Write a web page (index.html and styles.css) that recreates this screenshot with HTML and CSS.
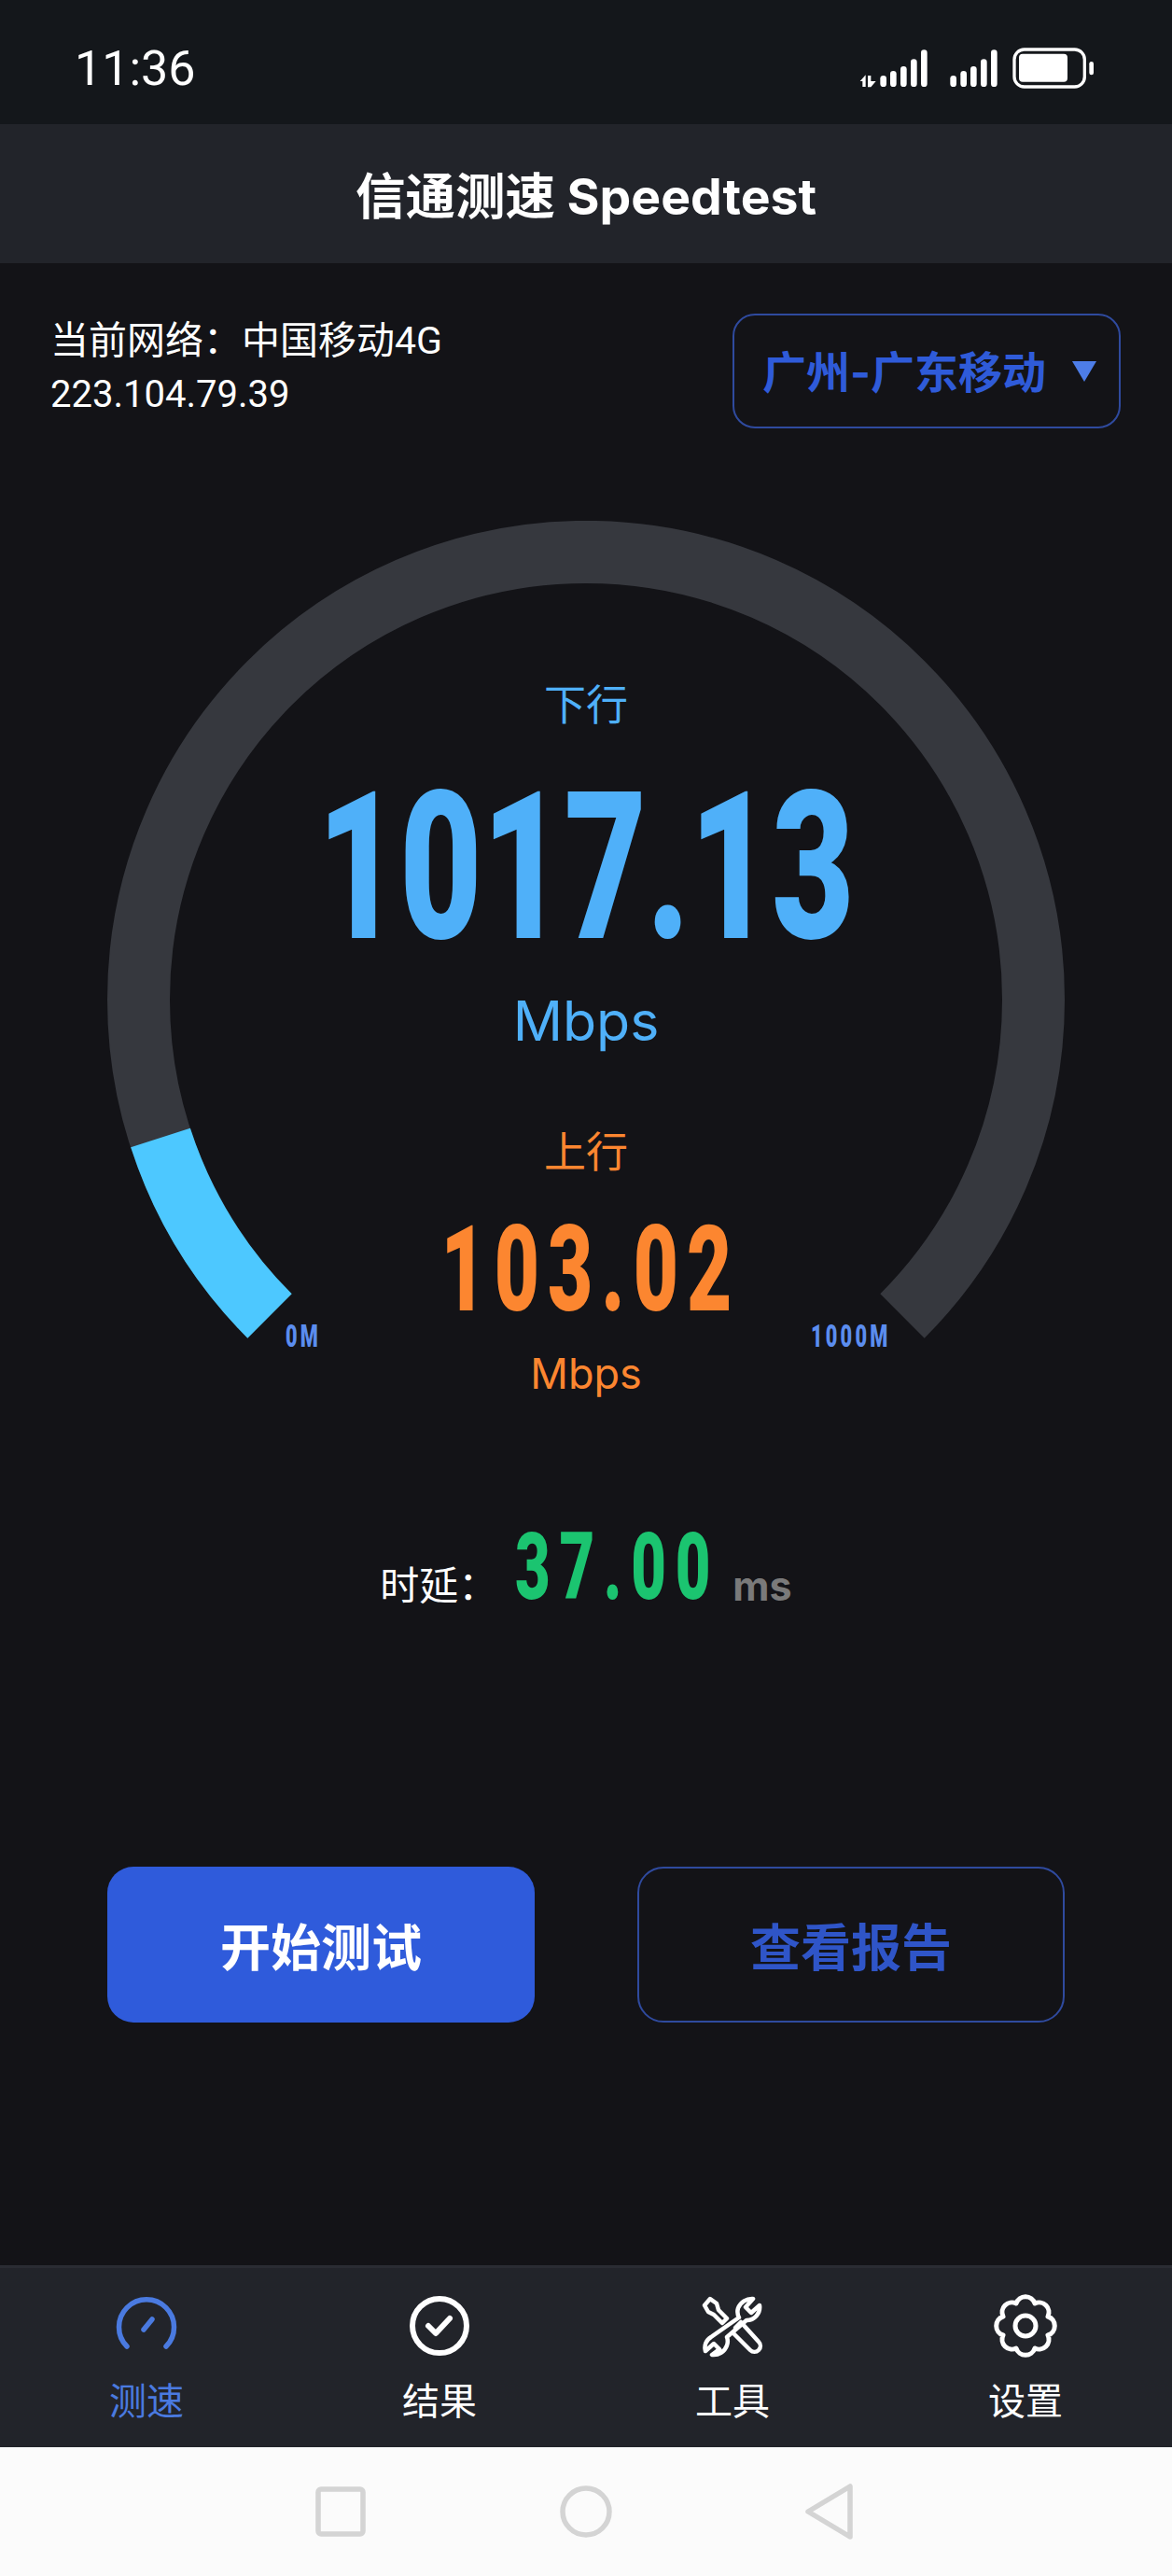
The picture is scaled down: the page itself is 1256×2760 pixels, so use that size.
FILE: index.html
```html
<!DOCTYPE html>
<html lang="zh-CN">
<head>
    <meta charset="UTF-8">
    <meta name="viewport" content="width=device-width, initial-scale=1.0">
    <title>信通测速 Speedtest</title>
    <link rel="stylesheet" href="styles.css">
</head>
<body>

    <div class="status-bar">
        <span class="clock">11:36</span>
        <svg class="status-icons" viewBox="0 0 960 240">
            <g fill="#fff">
                <path d="M125 168L143 148V186H133V168Z"/>
                <path d="M150 150H160V168H176L160 187H150Z"/>
                <rect x="190" y="150" width="20" height="36" rx="10"/>
                <rect x="222" y="135" width="20" height="51" rx="10"/>
                <rect x="255" y="120" width="20" height="66" rx="10"/>
                <rect x="288" y="97" width="20" height="89" rx="10"/>
                <rect x="321" y="67" width="20" height="119" rx="10"/>
                <rect x="415" y="150" width="20" height="36" rx="10"/>
                <rect x="448" y="135" width="20" height="51" rx="10"/>
                <rect x="480" y="120" width="20" height="66" rx="10"/>
                <rect x="513" y="97" width="20" height="89" rx="10"/>
                <rect x="546" y="67" width="20" height="119" rx="10"/>
                <rect x="636" y="80" width="156" height="90" rx="12"/>
                <rect x="862" y="105" width="14" height="43" rx="7"/>
            </g>
            <rect x="621" y="66" width="226" height="120" rx="32" fill="none" stroke="#fff" stroke-width="10"/>
        </svg>
    </div>

    <header class="title-bar">信通测速 Speedtest</header>

    <main class="content">
        <div class="net-row">
            <div class="net-info">
                <div>当前网络：中国移动4G</div>
                <div class="net-ip">223.104.79.39</div>
            </div>
            <div class="server-select">
                <span>广州-广东移动</span>
                <i class="caret"></i>
            </div>
        </div>

        <section class="gauge">
            <svg class="gauge-ring" viewBox="0 0 1026 880">
                <path d="M174 852A479.5 479.5 0 1 1 852 852" fill="none" stroke="#36383e" stroke-width="67"/>
                <path d="M174 852A479.5 479.5 0 0 1 57 661" fill="none" stroke="#4dc8ff" stroke-width="67"/>
            </svg>
            <span class="scale-mark scale-min">0M</span>
            <span class="scale-mark scale-max">1000M</span>

            <div class="label down-label">下行</div>
            <div class="big-num down-num"><span>1017.13</span></div>
            <div class="unit down-unit">Mbps</div>
            <div class="label up-label">上行</div>
            <div class="big-num up-num"><span>103.02</span></div>
            <div class="unit up-unit">Mbps</div>
        </section>

        <div class="latency">
            <span class="latency-label">时延：</span>
            <span class="big-num latency-num"><span>37.00</span></span>
            <span class="latency-unit">ms</span>
        </div>

        <div class="actions">
            <button class="btn btn-primary">开始测试</button>
            <button class="btn btn-outline">查看报告</button>
        </div>
    </main>

    <nav class="tab-bar">
        <a class="tab active">
            <svg class="tab-icon" viewBox="0 0 70 70">
                <path d="M14 57A29.5 29.5 0 1 1 56 57" fill="none" stroke="currentColor" stroke-width="5.5" stroke-linecap="round"/>
                <path d="M32 39L41 28" fill="none" stroke="currentColor" stroke-width="5.5" stroke-linecap="round"/>
            </svg>
            <span>测速</span>
        </a>
        <a class="tab">
            <svg class="tab-icon" viewBox="0 0 70 70">
                <circle cx="35" cy="35" r="29" fill="none" stroke="currentColor" stroke-width="6"/>
                <path d="M23 35L31 43L46 27" fill="none" stroke="currentColor" stroke-width="6" stroke-linecap="round" stroke-linejoin="round"/>
            </svg>
            <span>结果</span>
        </a>
        <a class="tab">
            <svg class="tab-icon" viewBox="0 0 70 70" fill="none" stroke="currentColor" stroke-width="4.5" stroke-linejoin="round" stroke-linecap="round">
                <path d="M5 13L11 6L18 11L20 18L29 27L24 32L15 23L9 20Z"/>
                <path d="M38 37L44 31L63 52A6 6 0 0 1 54 61L36 43"/>
                <path d="M64 13L55 21L49 15L57 6A16 16 0 0 0 41 16A13 13 0 0 0 42 26L12 47A13 13 0 0 0 6 62L15 54L21 60L13 66A15 15 0 0 0 29 56A13 13 0 0 0 29 47L50 29A14 14 0 0 0 64 13Z"/>
            </svg>
            <span>工具</span>
        </a>
        <a class="tab">
            <svg class="tab-icon" viewBox="0 0 70 70" fill="none" stroke="currentColor" stroke-width="5" stroke-linejoin="round">
                <path d="M59 45A10.5 10.5 0 0 0 59 25A10.5 10.5 0 0 0 45 11A10.5 10.5 0 0 0 25 11A10.5 10.5 0 0 0 11 25A10.5 10.5 0 0 0 11 45A10.5 10.5 0 0 0 25 59A10.5 10.5 0 0 0 45 59A10.5 10.5 0 0 0 59 45Z"/>
                <circle cx="35" cy="35" r="11"/>
            </svg>
            <span>设置</span>
        </a>
    </nav>

    <div class="system-nav">
        <svg class="sys-icon" viewBox="0 0 60 60"><rect x="6" y="6" width="48" height="48" rx="3"/></svg>
        <svg class="sys-icon" viewBox="0 0 60 60"><circle cx="30" cy="30" r="25"/></svg>
        <svg class="sys-icon" viewBox="0 0 60 60"><path d="M50 3V57L5 30Z"/></svg>
    </div>

</body>
</html>
```

FILE: styles.css
```css
* {
    box-sizing: border-box;
}
body {
    margin: 0;
    width: 1256px;
    height: 2760px;
    display: flex;
    flex-direction: column;
    background: #131317;
    color: #fff;
    font-family: "Inter", "Noto Sans CJK SC", sans-serif;
    overflow: hidden;
}

/* status bar */
.status-bar {
    height: 133px;
    flex: none;
    background: #14171b;
    padding: 0 55px 0 80px;
    display: flex;
    align-items: center;
    justify-content: space-between;
}
.clock {
    font-family: "Roboto", sans-serif;
    font-size: 52px;
    padding-top: 14px;
}
.status-icons {
    width: 320px;
    height: 80px;
    margin-right: 1px;
    margin-top: 8px;
}

.title-bar {
    height: 149px;
    flex: none;
    background: #22242a;
    padding-bottom: 3px;
    display: flex;
    align-items: center;
    justify-content: center;
    font-size: 53.5px;
    font-weight: 700;
}

.content {
    flex: 1;
}

/* network row */
.net-row {
    padding: 54px 55px 0 54px;
    display: flex;
    justify-content: space-between;
    align-items: flex-start;
}
.net-info {
    font-family: "Roboto", "Noto Sans CJK SC", sans-serif;
    font-size: 41px;
    line-height: 58px;
}
.net-ip {
    font-size: 40px;
}
.server-select {
    width: 416px;
    height: 123px;
    padding: 0 0 5px 30px;
    border: 2px solid #2f4a9e;
    border-radius: 24px;
    display: flex;
    align-items: center;
    gap: 28px;
    color: #2f5bd9;
    font-size: 47px;
    font-weight: 700;
}
.caret {
    width: 0;
    height: 0;
    margin-top: 5px;
    border-left: 13px solid transparent;
    border-right: 13px solid transparent;
    border-top: 22px solid #4d7de8;
}

/* gauge */
.gauge {
    position: relative;
    width: 1026px;
    margin: 99px auto 0;
    padding-top: 168px;
    text-align: center;
}
.gauge-ring {
    position: absolute;
    top: 0;
    left: 0;
    width: 1026px;
    height: 880px;
}
.scale-mark {
    position: absolute;
    top: 853px;
    font-family: "Roboto", sans-serif;
    font-weight: 900;
    font-size: 34px;
    line-height: 40px;
    letter-spacing: 5px;
    color: #5b8def;
    transform: scaleX(0.64);
    transform-origin: left;
}
.scale-min {
    left: 191px;
}
.scale-max {
    left: 754px;
}
.label, .unit, .big-num {
    position: relative;
}
.label {
    font-size: 45px;
    line-height: 60px;
}
.unit {
    line-height: 60px;
}
.big-num {
    font-family: "Roboto", sans-serif;
    font-weight: 900;
    white-space: nowrap;
}
.big-num > span {
    display: inline-block;
}
.down-label, .down-num, .down-unit {
    color: #4fb0f9;
}
.up-label, .up-num, .up-unit {
    color: #fc8630;
}
.down-num {
    margin-top: 64px;
    font-size: 220px;
    line-height: 160px;
}
.down-num > span {
    transform: scaleX(0.692);
}
.down-unit {
    margin-top: 54px;
    font-size: 59px;
}
.up-label {
    margin-top: 81px;
}
.up-num {
    margin-top: 48px;
    padding-left: 10px;
    font-size: 128px;
    line-height: 94px;
}
.up-num > span {
    letter-spacing: 14px;
    transform: scaleX(0.65);
}
.up-unit {
    margin-top: 35px;
    font-size: 45px;
}

/* latency */
.latency {
    height: 90px;
    margin-top: 148px;
    display: flex;
    align-items: center;
    justify-content: center;
}
.latency-label {
    font-family: "Roboto", "Noto Sans CJK SC", sans-serif;
    font-size: 42px;
}
.latency-num {
    width: 206px;
    margin: -32px 0 0 19px;
    font-size: 100px;
    line-height: 90px;
    color: #1bc470;
}
.latency-num > span {
    letter-spacing: 15px;
    transform: scaleX(0.65);
    transform-origin: left;
}
.latency-unit {
    margin: 8px 0 0 27px;
    font-size: 43px;
    font-weight: 700;
    color: #7a7a7a;
}

/* buttons */
.actions {
    margin-top: 260px;
    padding: 0 115px;
    display: flex;
    justify-content: space-between;
}
.btn {
    width: 458px;
    height: 167px;
    border-radius: 28px;
    font-family: inherit;
    font-size: 54px;
    font-weight: 700;
}
.btn-primary {
    background: #2f5bdb;
    border: none;
    color: #fff;
}
.btn-outline {
    background: transparent;
    border: 2px solid #2f4a9e;
    color: #2f55c8;
}

/* bottom tabs */
.tab-bar {
    height: 195px;
    flex: none;
    background: #22242a;
    border-top: 3px solid #2a2c33;
    display: grid;
    grid-template-columns: repeat(4, 1fr);
}
.tab {
    display: flex;
    flex-direction: column;
    align-items: center;
    padding-top: 27px;
    font-size: 40px;
    line-height: 56px;
    color: #fff;
}
.tab-icon {
    width: 70px;
    height: 70px;
    margin-bottom: 18px;
}
.tab.active {
    color: #4a7ae0;
}

.system-nav {
    height: 138px;
    flex: none;
    background: #fbfbfb;
    padding-left: 335px;
    display: flex;
    align-items: center;
    gap: 203px;
}
.sys-icon {
    width: 60px;
    height: 60px;
    fill: none;
    stroke: #d4d4d4;
    stroke-width: 5.5;
    stroke-linejoin: round;
}
```
